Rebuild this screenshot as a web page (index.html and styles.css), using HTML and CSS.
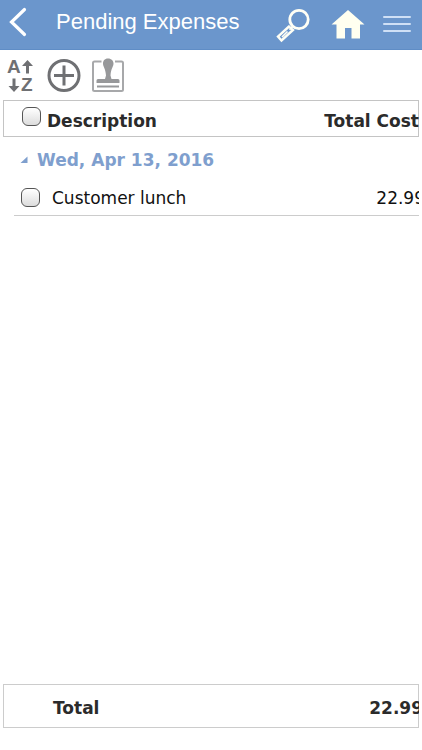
FILE: index.html
```html
<!DOCTYPE html>
<html lang="en">
<head>
<meta charset="utf-8">
<meta name="viewport" content="width=device-width, initial-scale=1">
<title>Pending Expenses</title>
<link rel="stylesheet" href="styles.css">
</head>
<body>
<header class="bar">
  <button class="icon-btn" aria-label="Back">
    <svg width="36" height="50" viewBox="0 0 36 50"><path d="M24.500 9.500 11.500 22 24.500 34.500" fill="none" stroke="#fff" stroke-width="3.200" stroke-linecap="round"/></svg>
  </button>
  <h1 class="title">Pending Expenses</h1>
  <nav class="actions">
    <button class="icon-btn" aria-label="Search">
      <svg width="36" height="50" viewBox="0 0 36 50"><g fill="none" stroke="#fffff5"><circle cx="24" cy="19.500" r="9.200" stroke-width="2.800"/><path d="M14 26.500 3 36.500 6.500 40.500 18 30Z" stroke-width="2.400"/><path d="M7 37 12.500 31.500M14.500 29.800 18 26.200" stroke-width="1.600"/></g></svg>
    </button>
    <a class="icon-btn" href="#home" aria-label="Home">
      <svg width="36" height="50" viewBox="0 0 36 50"><path d="M19 10 35.500 24.500H31V38.500H22.500V28H16V38.500H7.500V24.500H2.500Z" fill="#fffff0"/></svg>
    </a>
    <button class="icon-btn" aria-label="Menu">
      <svg width="28" height="50" viewBox="0 0 28 50"><path d="M1 17H27M1 24H27M1 31H27" stroke="#cfe0f6" stroke-width="2" stroke-linecap="round"/></svg>
    </button>
  </nav>
</header>
<main class="page">
  <div class="toolbar">
    <button class="icon-btn" aria-label="Sort">
      <svg class="sort" width="30" height="36" viewBox="0 0 30 36"><g fill="#6f7073"><text x="1" y="15">A</text><text x="15" y="33">Z</text><path d="M21.500 2 27 8H23V15.500H20V8H16ZM8 34 2.500 28H6.500V20.500H9.500V28H13.500Z"/></g></svg>
    </button>
    <button class="icon-btn" aria-label="Add">
      <svg width="34" height="36" viewBox="1 0 34 36"><g fill="none" stroke="#6f7073" stroke-width="3"><circle cx="18" cy="17.500" r="15"/><path d="M8 17.500H28M18 7.500V27.500"/></g></svg>
    </button>
    <button class="icon-btn" aria-label="Submit for approval">
      <svg width="33" height="36" viewBox="1 0 33 36"><path d="M10.500 3.500H3.500Q2 3.500 2 5V31.500Q2 33 3.500 33H30.500Q32 33 32 31.500V5Q32 3.500 30.500 3.500H24" fill="none" stroke="#a7a8aa" stroke-width="2"/><path d="M17 .500C13.500 .500 12 3 12 5.500 12 9 14.500 10 15 17.500L14 21H7Q5.500 21 5.500 22.500V25H28.500V22.500Q28.500 21 27 21H20.500L19.500 17.500C20 10 22.500 9 22.500 5.500 22.500 3 20.500 .500 17 .500Z" fill="#97989a"/><path d="M6 28.500H28" stroke="#97989a" stroke-width="2"/></svg>
    </button>
  </div>
  <table class="expenses">
    <thead>
      <tr class="row head">
        <td class="check"><input type="checkbox" aria-label="Select all expenses"></td>
        <th class="name" scope="col">Description</th>
        <th class="cost" scope="col">Total Cost</th>
      </tr>
    </thead>
    <tbody>
      <tr class="row group">
        <th scope="rowgroup" colspan="3"><button class="group-btn"><svg width="8" height="8" viewBox="0 0 8 8"><path d="M7.500 .500V7H.500Z" fill="#7f9fce"/></svg>Wed, Apr 13, 2016</button></th>
      </tr>
      <tr class="row item">
        <td class="check"><input type="checkbox" id="lunch"></td>
        <td class="name"><label for="lunch">Customer lunch</label></td>
        <td class="cost">22.99</td>
      </tr>
    </tbody>
    <tfoot>
      <tr class="row total">
        <th class="name" scope="row">Total</th>
        <td class="cost">22.99</td>
      </tr>
    </tfoot>
  </table>
</main>
</body>
</html>
```
FILE: styles.css
```css
* {
  box-sizing: border-box;
}

body {
  display: flex;
  flex-direction: column;
  min-height: 100vh;
  margin: 0;
  overflow-x: hidden;
  background: #fff;
  color: #2b2b2b;
  font: 17px/24px Verdana, "DejaVu Sans", sans-serif;
}

button {
  padding: 0;
  border: 0;
  background: none;
  color: inherit;
  font: inherit;
}

svg {
  display: block;
}

.icon-btn {
  display: block;
  flex: none;
}

.bar {
  display: flex;
  height: 50px;
  background: #6b96cc;
  border-bottom: 1px solid #5f8dc6;
}

.title {
  flex: 1;
  margin: 0;
  padding-left: 20px;
  color: #fff;
  font: 22px/44px "Liberation Sans", sans-serif;
  white-space: nowrap;
}

.actions {
  display: flex;
  gap: 18px;
  padding-right: 11px;
}

.page {
  display: flex;
  flex: 1;
  flex-direction: column;
  padding: 0 3px 22px;
}

.toolbar {
  display: flex;
  gap: 11px;
  height: 50px;
  padding: 8px 3px;
}

.sort {
  overflow: visible;
}

.sort text {
  font: bold 19px "Liberation Sans", sans-serif;
}

.expenses {
  display: flex;
  flex: 1;
  flex-direction: column;
  overflow: hidden;
}

thead,
tbody,
tfoot {
  display: block;
}

tbody {
  flex: 1;
}

.row {
  display: flex;
  align-items: center;
}

th,
td {
  padding: 0;
  text-align: left;
  white-space: nowrap;
}

.name {
  flex: 1;
}

.check {
  display: flex;
}

.check input {
  appearance: none;
  width: 19px;
  height: 19px;
  margin: 0;
  border: 1px solid #555;
  border-radius: 6px;
  background: linear-gradient(#fff, #dcdcdc);
}

.head {
  height: 37px;
  padding-left: 18px;
  border: 1px solid #c4c4c4;
}

.head .check {
  padding-bottom: 4px;
}

.head .name {
  padding: 4px 0 0 6px;
}

.head .cost {
  margin-right: -1px;
  padding-top: 4px;
}

.group {
  height: 43px;
  padding: 3px 0 0 17px;
  color: #7f9fce;
}

.group-btn {
  display: flex;
  align-items: center;
  gap: 9px;
}

.item {
  height: 36px;
  margin-left: 11px;
  padding-left: 7px;
  border-bottom: 1px solid #ccc;
  color: #111;
}

.item .name {
  padding-left: 12px;
}

.item .cost {
  margin-right: -6px;
}

.total {
  height: 44px;
  padding: 3px 0 0 49px;
  border: 1px solid #ccc;
  font-weight: bold;
}

.total .cost {
  margin-right: -5px;
}
```
